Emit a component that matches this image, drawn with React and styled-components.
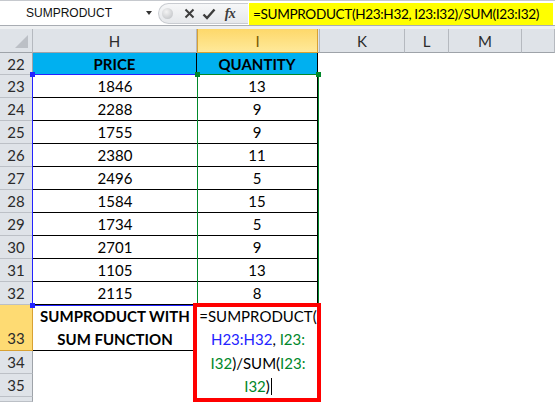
import React from 'react';
import styled, { createGlobalStyle } from 'styled-components';

const GlobalStyle = createGlobalStyle`
  body {
    margin: 0;
    background: #fff;
    font-family: Lato, 'Open Sans', sans-serif;
    overflow: hidden;
  }
`;

const Page = styled.div`
  width: 555px;
  height: 402px;
  overflow: hidden;
  background: #fff;
`;

const FormulaBar = styled.div`
  display: flex;
  align-items: stretch;
  border-top: 1px solid #c6c9ce;
  border-bottom: 1px solid #a9adb3;
  box-sizing: border-box;
  height: 26px;
  background: #fff;
`;

const NameBox = styled.div`
  display: flex;
  align-items: center;
  width: 158px;
  padding-left: 26px;
  box-sizing: border-box;
  font-family: 'Liberation Sans', Arial, sans-serif;
  font-size: 12px;
  color: #111;
`;

const NameText = styled.span`
  flex: 1;
`;

const DropArrow = styled.span`
  width: 0;
  height: 0;
  margin-right: 6px;
  border-left: 3.5px solid transparent;
  border-right: 3.5px solid transparent;
  border-top: 4px solid #333;
`;

const Pill = styled.div`
  display: flex;
  align-items: center;
  width: 90px;
  margin: 2px 0 1px;
  border-radius: 11px 0 0 11px;
  border: 1px solid #c9ccd1;
  border-right: none;
  background: linear-gradient(#f6f7f8, #e6e8eb);
  box-sizing: border-box;
`;

const Grip = styled.span`
  width: 11px;
  height: 11px;
  margin: 0 7px 0 3px;
  border-radius: 50%;
  background: radial-gradient(circle at 40% 35%, #f4f4f4, #b9bcc0);
`;

const IconSlot = styled.span`
  display: flex;
  align-items: center;
  justify-content: center;
  width: ${(p) => p.$w || 19}px;
  color: #3d3d3d;
`;

const Fx = styled.span`
  font-family: 'Liberation Serif', 'Times New Roman', serif;
  font-style: italic;
  font-weight: bold;
  font-size: 14px;
  color: #3d3d3d;
  letter-spacing: -0.5px;
`;

const FormulaInput = styled.div`
  display: flex;
  align-items: center;
  width: 300px;
  margin: 2px 0 0 1px;
  height: 22px;
  padding-left: 4px;
  background: #ffff00;
  font-size: 13.6px;
  letter-spacing: -0.35px;
  color: #000;
  white-space: nowrap;
  overflow: hidden;
`;

const Gap = styled.div`
  height: 3px;
  background: #eef0f2;
`;

const Sheet = styled.div`
  position: relative;
`;

const Grid = styled.div`
  display: grid;
  grid-template-columns: 33px 164px 121px 2px 85px 44px 73px 1fr;
  grid-template-rows: 24px 22px repeat(10, 23px) 46px 23px 23px 1fr;
  height: 373px;
`;

const Corner = styled.div`
  position: relative;
  background: #dfe3e8;
  border-right: 1px solid #b5b9bf;
  border-bottom: 1px solid #9ea3a9;
  box-sizing: border-box;

  &::after {
    content: '';
    position: absolute;
    right: 4px;
    bottom: 4px;
    border-left: 13px solid transparent;
    border-bottom: 13px solid #bcc0c6;
  }
`;

const ColHead = styled.div`
  display: flex;
  align-items: center;
  justify-content: center;
  font-size: 15px;
  color: ${(p) => (p.$active ? '#7a5a00' : '#2b2b2b')};
  background: ${(p) =>
    p.$active ? 'linear-gradient(#fdd86a, #ffe99a)' : '#dfe3e8'};
  border-right: 1px solid ${(p) => (p.$active ? '#d8a133' : '#b5b9bf')};
  border-left: ${(p) => (p.$active ? '1px solid #d8a133' : 'none')};
  border-bottom: 1px solid ${(p) => (p.$active ? '#d8a133' : '#9ea3a9')};
  box-sizing: border-box;
`;

const RowHead = styled.div`
  display: flex;
  align-items: ${(p) => (p.$active ? 'flex-end' : 'center')};
  justify-content: center;
  padding-bottom: ${(p) => (p.$active ? '3px' : '0')};
  font-size: 15px;
  color: #2b2b2b;
  background: ${(p) => (p.$active ? '#fedb73' : '#dfe3e8')};
  border-right: 1px solid ${(p) => (p.$active ? '#d8a133' : '#9ea3a9')};
  border-bottom: 1px solid ${(p) => (p.$active ? '#d8a133' : '#bcc0c6')};
  box-sizing: border-box;
`;

const Cell = styled.div`
  display: flex;
  align-items: center;
  justify-content: center;
  text-align: center;
  font-size: 15px;
  line-height: 23px;
  color: #000;
  font-weight: ${(p) => (p.$bold ? 700 : 400)};
  background: ${(p) => p.$bg || '#fff'};
  border-bottom: ${(p) => (p.$bottom ? '1px solid #000' : 'none')};
  border-right: ${(p) => (p.$right ? '1px solid #000' : 'none')};
  box-sizing: border-box;
`;

const Blank = styled.div`
  grid-column: ${(p) => p.$from} / -1;
  background: #fff;
`;

const RefBox = styled.div`
  position: absolute;
  left: ${(p) => p.$left}px;
  top: 45px;
  width: ${(p) => p.$width}px;
  height: 232px;
  border: 1px solid ${(p) => p.$color};
  box-sizing: border-box;
  pointer-events: none;
`;

const Handle = styled.span`
  position: absolute;
  width: 5px;
  height: 5px;
  background: ${(p) => p.$color};
  left: ${(p) => (p.$x === 'l' ? '-3px' : 'auto')};
  right: ${(p) => (p.$x === 'r' ? '-3px' : 'auto')};
  top: ${(p) => (p.$y === 't' ? '-3px' : 'auto')};
  bottom: ${(p) => (p.$y === 'b' ? '-3px' : 'auto')};
`;

const Editor = styled.div`
  position: absolute;
  left: 193px;
  top: 274px;
  width: 128px;
  height: 99px;
  border: 4px solid #ff0000;
  box-sizing: border-box;
  background: #fff;
  text-align: center;
  font-size: 15px;
  line-height: 23.3px;
  color: #000;
`;

const EditorText = styled.div`
  margin-top: -2px;
  padding-left: 2px;
`;

const Ref = styled.span`
  color: ${(p) => p.$color};
`;

const Caret = styled.span`
  display: inline-block;
  width: 1px;
  height: 17px;
  margin-left: 1px;
  background: #000;
  vertical-align: -3px;
`;

const BLUE = '#2323ff';
const GREEN = '#00882a';

const data = [
  [23, 1846, 13],
  [24, 2288, 9],
  [25, 1755, 9],
  [26, 2380, 11],
  [27, 2496, 5],
  [28, 1584, 15],
  [29, 1734, 5],
  [30, 2701, 9],
  [31, 1105, 13],
  [32, 2115, 8],
];

const CloseIcon = () => (
  <svg width="11" height="11" viewBox="0 0 11 11">
    <path d="M1.5 1.5 L9.5 9.5 M9.5 1.5 L1.5 9.5" stroke="#3d3d3d" strokeWidth="2" />
  </svg>
);

const CheckIcon = () => (
  <svg width="14" height="12" viewBox="0 0 14 12">
    <path d="M1.5 6.5 L5 10 L12.5 1.5" stroke="#3d3d3d" strokeWidth="2.4" fill="none" />
  </svg>
);

function Handles({ color }) {
  return (
    <>
      <Handle $color={color} $x="l" $y="t" />
      <Handle $color={color} $x="r" $y="t" />
      <Handle $color={color} $x="l" $y="b" />
      <Handle $color={color} $x="r" $y="b" />
    </>
  );
}

export default function App() {
  return (
    <Page>
      <GlobalStyle />
      <FormulaBar>
        <NameBox>
          <NameText>SUMPRODUCT</NameText>
          <DropArrow />
        </NameBox>
        <Pill>
          <Grip />
          <IconSlot $w={19}>
            <CloseIcon />
          </IconSlot>
          <IconSlot $w={19}>
            <CheckIcon />
          </IconSlot>
          <IconSlot $w={24}>
            <Fx>fx</Fx>
          </IconSlot>
        </Pill>
        <FormulaInput>=SUMPRODUCT(H23:H32, I23:I32)/SUM(I23:I32)</FormulaInput>
      </FormulaBar>
      <Gap />
      <Sheet>
        <Grid>
          <Corner />
          <ColHead>H</ColHead>
          <ColHead $active>I</ColHead>
          <ColHead />
          <ColHead>K</ColHead>
          <ColHead>L</ColHead>
          <ColHead>M</ColHead>
          <ColHead />

          <RowHead>22</RowHead>
          <Cell $bg="#00b0f0" $bold $right>
            PRICE
          </Cell>
          <Cell $bg="#00b0f0" $bold $right>
            QUANTITY
          </Cell>
          <Blank $from={4} />

          {data.map(([n, price, qty]) => (
            <React.Fragment key={n}>
              <RowHead>{n}</RowHead>
              <Cell $bottom>{price}</Cell>
              <Cell $bottom $right>
                {qty}
              </Cell>
              <Blank $from={4} />
            </React.Fragment>
          ))}

          <RowHead $active>33</RowHead>
          <Cell $bold $bottom>
            SUMPRODUCT WITH
            <br />
            SUM FUNCTION
          </Cell>
          <Cell />
          <Blank $from={4} />

          <RowHead>34</RowHead>
          <Blank $from={2} />
          <RowHead>35</RowHead>
          <Blank $from={2} />
          <RowHead />
          <Blank $from={2} />
        </Grid>

        <RefBox $left={32} $width={166} $color={BLUE}>
          <Handles color={BLUE} />
        </RefBox>
        <RefBox $left={197} $width={122} $color={GREEN}>
          <Handles color={GREEN} />
        </RefBox>

        <Editor>
          <EditorText>
            =SUMPRODUCT(
            <br />
            <Ref $color={BLUE}>H23:H32</Ref>, <Ref $color={GREEN}>I23:</Ref>
            <br />
            <Ref $color={GREEN}>I32</Ref>)/SUM(<Ref $color={GREEN}>I23:</Ref>
            <br />
            <Ref $color={GREEN}>I32</Ref>)
            <Caret />
          </EditorText>
        </Editor>
      </Sheet>
    </Page>
  );
}
